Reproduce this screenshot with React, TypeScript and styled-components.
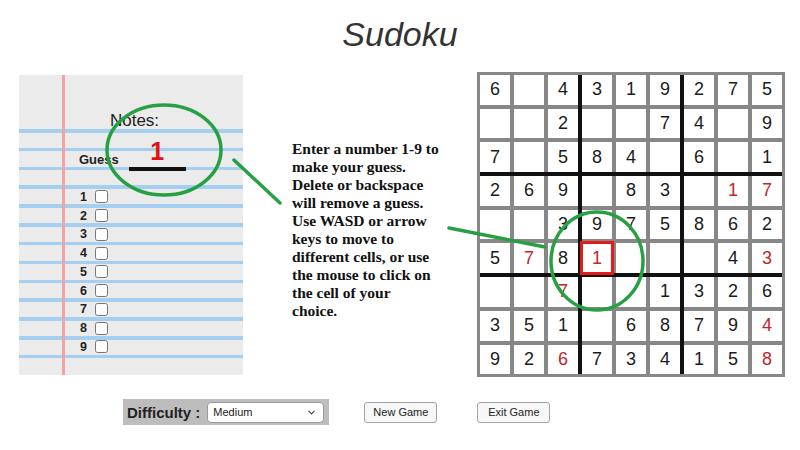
import React from "react";
import styled, { createGlobalStyle } from "styled-components";
import { ChevronDown } from "lucide-react";

const GlobalStyle = createGlobalStyle`
  html, body {
    margin: 0;
    padding: 0;
    background: #fff;
  }
  body {
    font-family: "Liberation Sans", Arial, sans-serif;
  }
`;

// 0 = empty, negative = player's guess (red)
const board: number[][] = [
  [6, 0, 4, 3, 1, 9, 2, 7, 5],
  [0, 0, 2, 0, 0, 7, 4, 0, 9],
  [7, 0, 5, 8, 4, 0, 6, 0, 1],
  [2, 6, 9, 0, 8, 3, 0, -1, -7],
  [0, 0, 3, 9, 7, 5, 8, 6, 2],
  [5, -7, 8, -1, 0, 0, 0, 4, -3],
  [0, 0, -7, 0, 0, 1, 3, 2, 6],
  [3, 5, 1, 0, 6, 8, 7, 9, -4],
  [9, 2, -6, 7, 3, 4, 1, 5, -8],
];

const selected = { row: 5, col: 3 };

const instructions = [
  "Enter a number 1-9 to",
  "make your guess.",
  "Delete or backspace",
  "will remove a guess.",
  "Use WASD or arrow",
  "keys to move to",
  "different cells, or use",
  "the mouse to click on",
  "the cell of your",
  "choice.",
];

const App = () => {
  const boxes = [0, 1, 2, 3, 4, 5, 6, 7, 8];
  return (
    <Page>
      <GlobalStyle />
      <Title>Sudoku</Title>
      <MainRow>
        <NotesPanel>
          <NotesTitle>Notes:</NotesTitle>
          <GuessRow>
            <GuessLabel>Guess</GuessLabel>
            <GuessBox>1</GuessBox>
          </GuessRow>
          <NoteList>
            {[1, 2, 3, 4, 5, 6, 7, 8, 9].map((n) => (
              <NoteRow key={n}>
                <NoteNum>{n}</NoteNum>
                <NoteCheck type="checkbox" />
              </NoteRow>
            ))}
          </NoteList>
        </NotesPanel>

        <Instructions>
          {instructions.map((line) => (
            <Line key={line}>{line}</Line>
          ))}
        </Instructions>

        <Board>
          {boxes.map((b) => {
            const br = Math.floor(b / 3) * 3;
            const bc = (b % 3) * 3;
            return (
              <Box key={b}>
                {boxes.map((c) => {
                  const r = br + Math.floor(c / 3);
                  const col = bc + (c % 3);
                  const v = board[r][col];
                  const isSel = r === selected.row && col === selected.col;
                  return (
                    <Cell key={c} $guess={v < 0} $selected={isSel}>
                      {v === 0 ? "" : Math.abs(v)}
                    </Cell>
                  );
                })}
              </Box>
            );
          })}
        </Board>
      </MainRow>

      <Controls>
        <DifficultyBox>
          <DifficultyLabel>Difficulty :</DifficultyLabel>
          <SelectWrap>
            <DifficultySelect defaultValue="Medium">
              <option>Easy</option>
              <option>Medium</option>
              <option>Hard</option>
            </DifficultySelect>
            <Chevron size={11} strokeWidth={2.2} />
          </SelectWrap>
        </DifficultyBox>
        <GameButton $gap={35}>New Game</GameButton>
        <GameButton $gap={40}>Exit Game</GameButton>
      </Controls>

      <Annotations viewBox="0 0 800 450">
        <ellipse cx="164" cy="150" rx="57" ry="45" />
        <line x1="234" y1="160" x2="280" y2="203" />
        <line x1="449" y1="228" x2="545" y2="247" />
        <ellipse cx="597" cy="261" rx="46" ry="49" />
      </Annotations>
    </Page>
  );
};

export default App;

const Page = styled.div`
  position: relative;
  width: 800px;
  height: 450px;
  overflow: hidden;
`;

const Title = styled.h1`
  margin: 14px 0 18px;
  height: 40px;
  line-height: 40px;
  text-align: center;
  font-family: "Liberation Sans", Arial, sans-serif;
  font-style: italic;
  font-weight: normal;
  font-size: 34px;
  color: #333;
`;

const MainRow = styled.div`
  display: flex;
  align-items: flex-start;
`;

const NotesPanel = styled.div`
  margin: 3px 0 0 19px;
  width: 224px;
  height: 300px;
  box-sizing: border-box;
  background:
    linear-gradient(to right, transparent 43px, #f2a3a3 43px, #f2a3a3 46px, transparent 46px),
    repeating-linear-gradient(to bottom, #a4cff0 0, #a4cff0 3.5px, transparent 3.5px, transparent 18.83px)
      0 54px / 100% 245px no-repeat,
    #ebebeb;
  overflow: hidden;
`;

const NotesTitle = styled.div`
  margin-top: 36px;
  padding-left: 7px;
  height: 20px;
  line-height: 20px;
  text-align: center;
  font-size: 17px;
  color: #222;
`;

const GuessRow = styled.div`
  display: flex;
  align-items: flex-end;
  margin-top: 5px;
  padding-left: 60px;
`;

const GuessLabel = styled.span`
  font-size: 13px;
  font-weight: bold;
  line-height: 16px;
  margin-bottom: 3px;
  color: #222;
`;

const GuessBox = styled.div`
  margin-left: 10px;
  width: 57px;
  height: 30px;
  line-height: 30px;
  padding-bottom: 1px;
  border-bottom: 4px solid #111;
  text-align: center;
  font-size: 25px;
  font-weight: bold;
  color: #e41010;
`;

const NoteList = styled.div`
  margin-top: 16.6px;
  padding-left: 61px;
`;

const NoteRow = styled.div`
  display: flex;
  align-items: center;
  height: 18.75px;
`;

const NoteNum = styled.span`
  font-size: 12.5px;
  font-weight: bold;
  color: #222;
  width: 7px;
`;

const NoteCheck = styled.input`
  margin: 0 0 0 8px;
  width: 13px;
  height: 13px;
`;

const Instructions = styled.div`
  margin: 68px 0 0 49px;
  width: 185px;
  font-family: "Liberation Serif", "Times New Roman", serif;
  font-weight: bold;
  font-size: 15.5px;
  line-height: 18px;
  color: #111;
`;

const Line = styled.div`
  white-space: nowrap;
`;

const Board = styled.div`
  display: grid;
  grid-template-columns: repeat(3, auto);
  gap: 4px;
  background: #111;
  border: 3px solid #878787;
`;

const Box = styled.div`
  display: grid;
  grid-template-columns: repeat(3, 30px);
  grid-auto-rows: 29.7px;
  gap: 4px;
  background: #878787;
`;

const Cell = styled.div<{ $guess: boolean; $selected: boolean }>`
  display: flex;
  align-items: center;
  justify-content: center;
  background: #fff;
  font-family: "Liberation Sans", Arial, sans-serif;
  font-size: 18px;
  color: ${(p) => (p.$guess ? "#c0262b" : "#1a1a1a")};
  outline: ${(p) => (p.$selected ? "3px solid #e31b1b" : "none")};
  outline-offset: -1px;
  position: relative;
  z-index: ${(p) => (p.$selected ? 1 : 0)};
`;

const Controls = styled.div`
  display: flex;
  align-items: center;
  height: 26px;
  margin-top: 22px;
  padding-left: 123px;
`;

const DifficultyBox = styled.div`
  display: flex;
  align-items: center;
  gap: 7px;
  height: 26px;
  padding: 0 5px 0 4px;
  background: #bdbdbd;
`;

const DifficultyLabel = styled.span`
  font-size: 15px;
  font-weight: bold;
  color: #222;
`;

const SelectWrap = styled.div`
  position: relative;
  display: flex;
`;

const DifficultySelect = styled.select`
  appearance: none;
  width: 117px;
  height: 21px;
  padding: 0 0 0 5px;
  font-family: "Liberation Sans", Arial, sans-serif;
  font-size: 11px;
  color: #222;
  background: #fff;
  border: 1px solid #9a9a9a;
  border-radius: 4px;
  outline: none;
`;

const Chevron = styled(ChevronDown)`
  position: absolute;
  right: 7px;
  top: 5px;
  color: #333;
  pointer-events: none;
`;

const GameButton = styled.button<{ $gap: number }>`
  margin-left: ${(p) => p.$gap}px;
  width: 73px;
  height: 21px;
  padding: 0;
  font-family: "Liberation Sans", Arial, sans-serif;
  font-size: 11px;
  color: #222;
  background: #f7f7f7;
  border: 1px solid #a3a3a3;
  border-radius: 3px;
`;

const Annotations = styled.svg`
  position: absolute;
  left: 0;
  top: 0;
  width: 800px;
  height: 450px;
  pointer-events: none;
  fill: none;
  stroke: #27a044;
  stroke-width: 3.5;
  stroke-linecap: round;
`;
